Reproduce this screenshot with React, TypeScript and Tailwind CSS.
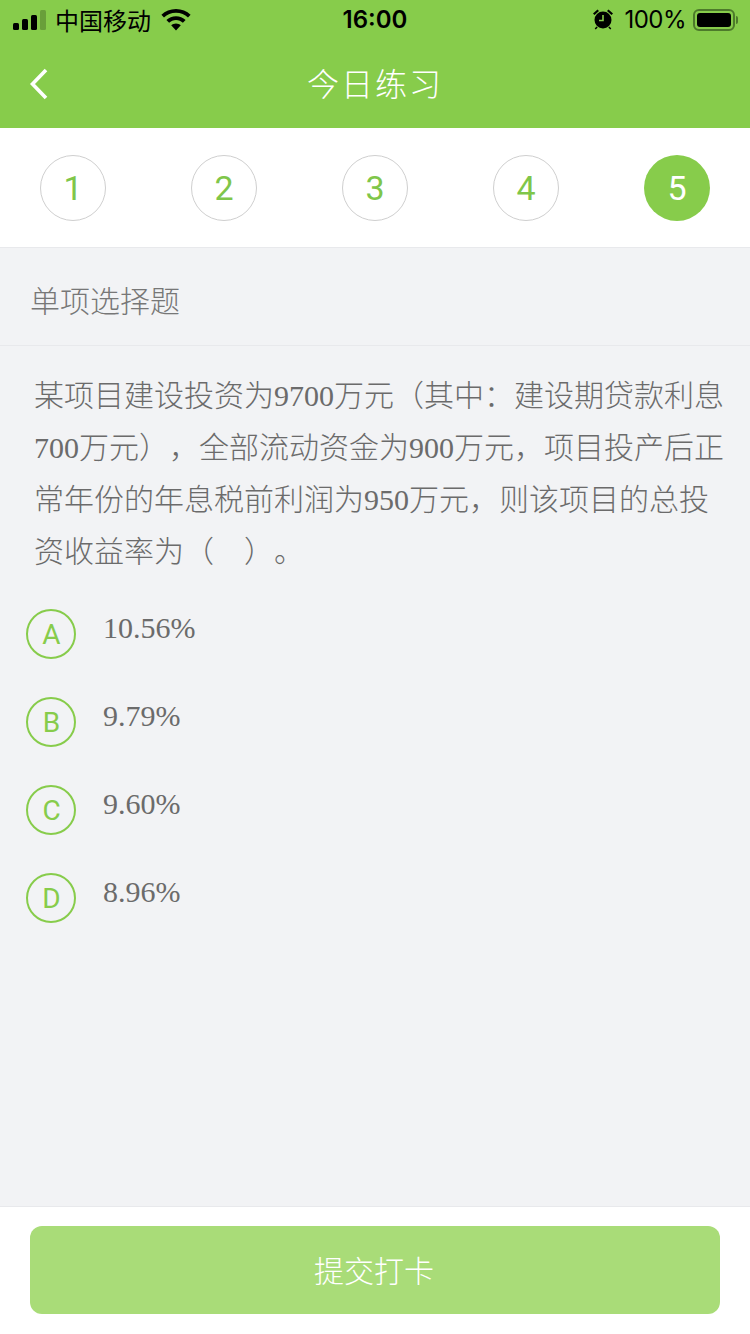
const cjk = "font-['Noto_Sans_CJK_SC','Liberation_Sans',sans-serif]";

const steps = [1, 2, 3, 4, 5];

const options = [
  { key: "A", text: "10.56%" },
  { key: "B", text: "9.79%" },
  { key: "C", text: "9.60%" },
  { key: "D", text: "8.96%" },
];

const StatusBar = () => (
  <div className="flex h-10 items-center justify-between text-black">
    <div className="flex w-[300px] items-center pl-[13px]">
      <svg width="34" height="20" viewBox="0 0 34 20" fill="currentColor">
        <rect x="0" y="13" width="6" height="7" rx="1.5" />
        <rect x="9" y="9" width="6" height="11" rx="1.5" />
        <rect x="18" y="5" width="6" height="15" rx="1.5" />
        <rect x="27" y="0" width="6" height="20" rx="1.5" fillOpacity="0.22" />
      </svg>
      <span className={`ml-[8px] text-[24px] leading-none ${cjk}`}>中国移动</span>
      <svg className="ml-[10px]" width="30" height="22" viewBox="0 0 30 22" fill="currentColor">
        <path d="M15 0C9.3 0 4.2 2.2.4 5.8l2.6 2.8C6.1 5.6 10.3 3.8 15 3.8s8.9 1.8 12 4.8l2.6-2.8C25.8 2.2 20.7 0 15 0z" />
        <path d="M15 7.2c-3.7 0-7.1 1.4-9.6 3.8l2.7 2.8c1.8-1.7 4.2-2.8 6.9-2.8s5.1 1.1 6.9 2.8l2.7-2.8c-2.5-2.4-5.9-3.8-9.6-3.8z" />
        <path d="M15 14.4c-1.8 0-3.500.7-4.800 1.900L15 21.600l4.800-5.300c-1.300-1.200-3-1.900-4.800-1.900z" />
      </svg>
    </div>
    <span className="font-['Inter',sans-serif] text-[24px] font-semibold leading-none">16:00</span>
    <div className="flex w-[300px] items-center justify-end pr-[15px]">
      <svg className="-mt-[3px]" width="22" height="22" viewBox="0 0 22 22" fill="currentColor">
        <circle cx="11" cy="12" r="8.5" />
        <path d="M1 5.5 5.5 1.5 7 3 2.5 7zM21 5.5 16.500 1.500 15 3 19.500 7zM4.500 18.500l-1.800 2 1 1 2-2zM17.500 18.500l1.800 2-1 1-2-2z" />
        <path d="M11 7v5.500H7" fill="none" stroke="#87cc4b" strokeWidth="1.6" />
      </svg>
      <span className="ml-[10px] font-['Inter',sans-serif] text-[24px] leading-none tracking-[-0.5px]">100%</span>
      <div className="relative ml-[7px] h-[22px] w-[42px] rounded-[6px] border-2 border-[#4d7a2b] p-[2px]">
        <div className="h-full w-full rounded-[3px] bg-black" />
        <div className="absolute top-[5px] -right-[5px] h-2 w-[2px] rounded-r-sm bg-[#4d7a2b]" />
      </div>
    </div>
  </div>
);

const NavBar = () => (
  <div className="relative flex h-[88px] items-center justify-center pb-[4px]">
    <svg className="absolute top-[28px] left-[29px]" width="20" height="32" viewBox="0 0 20 32" fill="none" stroke="white" strokeWidth="3.6">
      <path d="M17 2 3.500 16 17 30" />
    </svg>
    <span className={`text-[32px] leading-none font-light tracking-[2px] text-white ${cjk}`}>今日练习</span>
  </div>
);

const StepRow = () => (
  <div className="flex h-[120px] items-center justify-between border-b border-[#e8e9ec] bg-white px-10">
    {steps.map((n) =>
      n === 5 ? (
        <div key={n} className="flex h-[66px] w-[66px] items-center justify-center rounded-full bg-[#87cc4b] pt-[1px] font-['Roboto',sans-serif] text-[34px] text-white">
          {n}
        </div>
      ) : (
        <div key={n} className="flex h-[66px] w-[66px] items-center justify-center rounded-full border border-[#cfcfcf] pt-[1px] font-['Roboto',sans-serif] text-[34px] text-[#7fc64a]">
          {n}
        </div>
      ),
    )}
  </div>
);

const Option = ({ letter, text }: { letter: string; text: string }) => (
  <div className="flex h-[50px] items-start">
    <div className="flex h-[50px] w-[50px] shrink-0 items-center justify-center rounded-full border-2 border-[#87cc4b] pt-[2px] pl-[1px] font-['Roboto',sans-serif] text-[28px] text-[#87cc4b]">
      {letter}
    </div>
    <span className="ml-[27px] font-['Liberation_Serif',serif] text-[30px] leading-[38px] text-[#6b6b6b]">{text}</span>
  </div>
);

export default function App() {
  return (
    <div className="flex h-[1334px] w-[750px] flex-col overflow-hidden bg-[#f2f3f5]">
      <div className="h-32 bg-[#87cc4b]">
        <StatusBar />
        <NavBar />
      </div>
      <StepRow />
      <div className={`flex h-[98px] items-center border-b border-[#e8e9ec] pt-[6px] pl-[30px] text-[30px] font-light text-[#777777] ${cjk}`}>
        单项选择题
      </div>
      <div className="flex-1">
        <p className="mt-6 ml-[34px] w-[690px] font-['Liberation_Serif','Noto_Sans_CJK_SC',serif] text-[30px] leading-[52px] font-light text-[#6b6b6b] [text-spacing-trim:space-all]">
          {"某项目建设投资为9700万元（其中：建设期贷款利息700万元），全部流动资金为900万元，项目投产后正常年份的年息税前利润为950万元，则该项目的总投资收益率为（\u00a0\u00a0\u00a0\u00a0）。"}
        </p>
        <div className="mt-[31px] ml-[26px] flex flex-col gap-[38px]">
          {options.map((o) => (
            <Option key={o.key} letter={o.key} text={o.text} />
          ))}
        </div>
      </div>
      <div className="flex h-[128px] border-t border-[#e8e9ec] bg-white px-[30px] pt-[19px]">
        <div className={`flex h-[88px] w-full items-center justify-center rounded-[12px] bg-[#a9dc78] pr-[2px] pb-[2px] text-[30px] font-light text-white ${cjk}`}>
          提交打卡
        </div>
      </div>
    </div>
  );
}
